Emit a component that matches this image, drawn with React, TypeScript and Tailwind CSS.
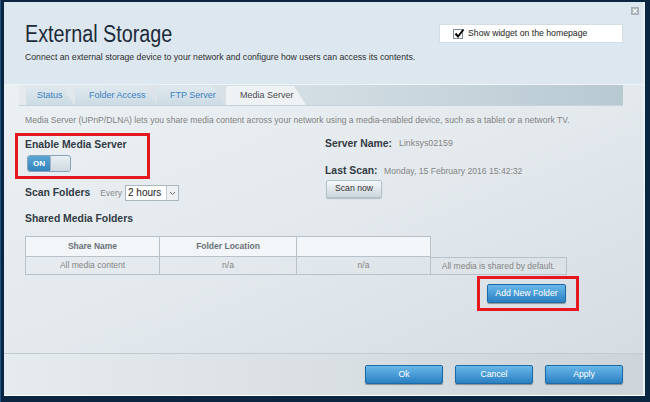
import React from "react";

const font = { fontFamily: '"Liberation Sans", Arial, sans-serif' };

function BlueButton({ children, w }: { children: React.ReactNode; w: string }) {
  return (
    <div
      className={`${w} h-[19px] flex items-center justify-center rounded-[2px] border border-[#1d6aa6] bg-gradient-to-b from-[#68b8ea] to-[#2a80c2] text-white text-[8.7px] shadow-[0_1px_1px_rgba(0,0,0,0.35)]`}
    >
      {children}
    </div>
  );
}

function Tab({ label, active, w, pl }: { label: string; active?: boolean; w: string; pl: string }) {
  return (
    <div
      className={`${w} ${pl} h-[19px] flex items-center text-[9px] ${
        active ? "bg-[#eef2f5] text-[#4a4a4a]" : "bg-gradient-to-b from-[#dfe8ee] to-[#ccdbe4] text-[#3b7fc0]"
      } [clip-path:polygon(0_0,calc(100%-12px)_0,100%_100%,0_100%)] rounded-tl-[3px]`}
    >
      {label}
    </div>
  );
}

const label = "text-[10.4px] leading-[14px] font-bold text-[#333b44]";

export default function App() {
  return (
    <div style={font} className="w-[650px] h-[402px] bg-[#0a2640] pl-[3px] pt-[2px] pr-[5px] pb-[6px] border-l-[1px] border-[#1d5282]">
      <div className="relative w-full h-full flex flex-col border-r-2 border-b border-r-[#eaf1f5] border-b-white bg-[#e3e9ee]">
        {/* close icon */}
        <div className="absolute top-[5px] right-[4px] w-[8px] h-[8px] bg-[#a9b1b7] flex items-center justify-center">
          <svg width="6" height="6" viewBox="0 0 6 6">
            <path d="M1 1 L5 5 M5 1 L1 5" stroke="#ffffff" strokeWidth="1.2" />
          </svg>
        </div>

        {/* header */}
        <div className="h-[83px] bg-[#dde7ef] pl-[21px] pr-[20px] pt-[18px] border-b border-[#eef3f6]">
          <div className="flex justify-between items-start">
            <div className="text-[23px] leading-[28px] text-[#1c2b39] inline-block origin-left scale-x-[0.86]">External Storage</div>
            <div className="mt-[4px] w-[184px] h-[19px] bg-white border border-[#d3dde4] flex items-center pl-[13px] gap-[5px]">
              <div className="w-[10px] h-[10px] border border-[#7d8c98] bg-white relative">
                <svg className="absolute -top-[2px] left-0" width="11" height="11" viewBox="0 0 11 11">
                  <path d="M1.5 5.5 L4 8.5 L9.5 1.5" stroke="#000" strokeWidth="2" fill="none" />
                </svg>
              </div>
              <span className="text-[8.7px] text-[#222]">Show widget on the homepage</span>
            </div>
          </div>
          <div className="mt-[2px] text-[8.7px] leading-[14px] text-[#2e2e2e]">
            Connect an external storage device to your network and configure how users can access its contents.
          </div>
        </div>

        {/* content */}
        <div className="flex-1 bg-gradient-to-br from-[#ebf0f3] via-[#e3e9ed] to-[#d6dde2] pl-[21px] pr-[20px]">
          {/* tab bar */}
          <div className="-ml-[6px] h-[21px] pt-[1px] pl-[7px] flex items-end bg-gradient-to-r from-[#e4eaee] via-[#d2dde3] to-[#b8c9d2] border-b border-[#c7d3da]">
            <Tab label="Status" w="w-[48px]" pl="pl-[11px]" />
            <div className="w-[1px]" />
            <Tab label="Folder Access" w="w-[82px]" pl="pl-[14px]" />
            <Tab label="FTP Server" w="w-[68px]" pl="pl-[13px]" />
            <div className="w-[1px]" />
            <Tab label="Media Server" w="w-[80px]" pl="pl-[14px]" active />
          </div>

          <div className="mt-[8px] text-[8.6px] leading-[12px] text-[#828282] whitespace-nowrap">
            Media Server (UPnP/DLNA) lets you share media content across your network using a media-enabled device, such as a tablet or a network TV.
          </div>

          <div className="flex">
            <div className="w-[300px]">
              <div className="mt-[7px] -ml-[10px] w-[135px] border-[3px] border-[#e5171f] pl-[7px] pt-[2px] pb-[4px]">
                <div className={label}>Enable Media Server</div>
                <div className="mt-[3px] ml-[2px] w-[44px] h-[17px] flex rounded-[3px] border border-[#86a3b7] overflow-hidden">
                  <div className="w-[22px] h-full bg-gradient-to-b from-[#58a6d6] to-[#3585bb] text-white text-[8px] font-bold flex items-center justify-center">
                    ON
                  </div>
                  <div className="flex-1 h-full bg-gradient-to-b from-[#e9eff3] to-[#cfd9e0] border-l border-[#a3b4bf] rounded-[2px]" />
                </div>
              </div>
              <div className="mt-[6px] flex items-center h-[16px]">
                <span className={label}>Scan Folders</span>
                <span className="ml-[10px] text-[8.5px] text-[#8a8a8a]">Every</span>
                <div className="ml-[3px] w-[54px] h-[16px] bg-white border border-[#a9b6be] flex">
                  <div className="flex-1 text-[10px] leading-[14px] text-[#222] pl-[2px]">2 hours</div>
                  <div className="w-[12px] border-l border-[#c4cdd3] bg-[#eef1f3] flex items-center justify-center">
                    <svg width="7" height="5" viewBox="0 0 7 5">
                      <path d="M1 1 L3.5 3.5 L6 1" stroke="#666" strokeWidth="1" fill="none" />
                    </svg>
                  </div>
                </div>
              </div>
            </div>

            <div className="pt-[11px]">
              <div className="flex items-center h-[14px]">
                <span className={`w-[74px] ${label}`}>Server Name:</span>
                <span className="text-[8.8px] text-[#858585]">Linksys02159</span>
              </div>
              <div className="mt-[13px] flex items-center h-[14px]">
                <span className={`w-[59px] ${label}`}>Last Scan:</span>
                <span className="text-[8.6px] text-[#858585]">Monday, 15 February 2016 15:42:32</span>
              </div>
              <div className="mt-[2px] ml-[1px] w-[56px] h-[18px] rounded-[2px] border border-[#b2c1ca] bg-gradient-to-b from-[#f6f8fa] to-[#ccd7de] flex items-center justify-center text-[8.7px] text-[#333] shadow-[0_1px_1px_rgba(0,0,0,0.2)]">
                Scan now
              </div>
            </div>
          </div>

          <div className={`mt-[11px] ${label}`}>Shared Media Folders</div>

          <div className="mt-[10px] w-[542px]">
            <div className="grid grid-cols-[135px_137px_134px_136px] text-[8.5px]">
              <div className="h-[21px] bg-[#f2f6f9] border border-[#b7c2ca] flex items-center justify-center font-bold text-[#6a7177]">Share Name</div>
              <div className="h-[21px] bg-[#f2f6f9] border-y border-r border-[#b7c2ca] flex items-center justify-center font-bold text-[#6a7177]">Folder Location</div>
              <div className="h-[21px] bg-[#f2f6f9] border-y border-r border-[#b7c2ca]" />
              <div className="h-[21px]" />
              <div className="h-[18px] border-x border-b border-[#b7c2ca] flex items-center justify-center text-[#858585]">All media content</div>
              <div className="h-[18px] border-r border-b border-[#b7c2ca] flex items-center justify-center text-[#858585]">n/a</div>
              <div className="h-[18px] border-r border-b border-[#b7c2ca] flex items-center justify-center text-[#858585]">n/a</div>
              <div className="h-[18px] border-r border-y border-[#b7c2ca] flex items-center justify-center text-[#858585]">All media is shared by default.</div>
            </div>
            <div className="mt-[1px] flex justify-end -mr-[12px]">
              <div className="border-[3px] border-[#e5171f] pl-[7px] pr-[10px] py-[5px]">
                <BlueButton w="w-[79px]">Add New Folder</BlueButton>
              </div>
            </div>
          </div>
        </div>

        {/* footer */}
        <div className="h-[42px] border-t border-[#c3cbd1] bg-gradient-to-r from-[#e6ebee] via-[#d9dfe3] to-[#cdd5da] flex items-start justify-end pr-[20px] pt-[11px] gap-[12px]">
          <BlueButton w="w-[78px]">Ok</BlueButton>
          <BlueButton w="w-[78px]">Cancel</BlueButton>
          <BlueButton w="w-[78px]">Apply</BlueButton>
        </div>
      </div>
    </div>
  );
}
